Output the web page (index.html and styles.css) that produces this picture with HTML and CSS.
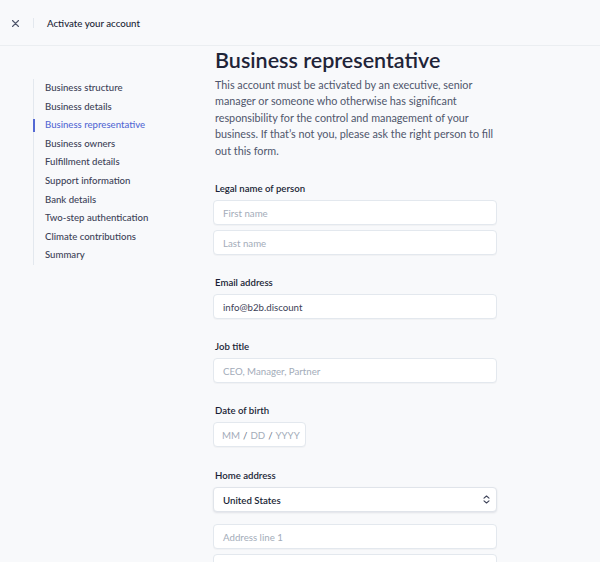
FILE: index.html
```html
<!DOCTYPE html>
<html lang="en">
<head>
<meta charset="utf-8">
<title>Activate your account</title>
<link rel="stylesheet" href="styles.css">
</head>
<body>
<header class="topbar">
  <button class="close" aria-label="Close">
    <svg width="7" height="7" viewBox="0 0 7 7"><path d="M0.5 0.5L6.5 6.5M6.5 0.5L0.5 6.5" stroke="#4f566b" stroke-width="1.1" stroke-linecap="round"/></svg>
  </button>
  <span class="divider"></span>
  <span class="topbar-title">Activate your account</span>
</header>
<main class="layout">
  <nav class="steps">
    <a class="step">Business structure</a>
    <a class="step">Business details</a>
    <a class="step active">Business representative</a>
    <a class="step">Business owners</a>
    <a class="step">Fulfillment details</a>
    <a class="step">Support information</a>
    <a class="step">Bank details</a>
    <a class="step">Two-step authentication</a>
    <a class="step">Climate contributions</a>
    <a class="step">Summary</a>
  </nav>
  <section class="content">
    <h1 class="title">Business representative</h1>
    <p class="intro">This account must be activated by an executive, senior manager or someone who otherwise has significant responsibility for the control and management of your business. If that’s not you, please ask the right person to fill out this form.</p>

    <div class="field first">
      <label class="label">Legal name of person</label>
      <div class="stack">
        <div class="input placeholder">First name</div>
        <div class="input placeholder">Last name</div>
      </div>
    </div>

    <div class="field">
      <label class="label">Email address</label>
      <div class="input value">info@b2b.discount</div>
    </div>

    <div class="field">
      <label class="label">Job title</label>
      <div class="input placeholder">CEO, Manager, Partner</div>
    </div>

    <div class="field">
      <label class="label">Date of birth</label>
      <div class="input date placeholder"><span>MM</span><span class="slash">/</span><span>DD</span><span class="slash">/</span><span>YYYY</span></div>
    </div>

    <div class="field home">
      <label class="label">Home address</label>
      <div class="input select">
        <span>United States</span>
        <svg width="7" height="9" viewBox="0 0 7 9"><path d="M1 3.2L3.5 1L6 3.2M1 5.8L3.5 8L6 5.8" fill="none" stroke="#3c4257" stroke-width="1.1" stroke-linecap="round" stroke-linejoin="round"/></svg>
      </div>
      <div class="stack address">
        <div class="input placeholder">Address line 1</div>
        <div class="input"></div>
      </div>
    </div>
  </section>
</main>
</body>
</html>
```
FILE: styles.css
```css
* { box-sizing: border-box; }
html, body { margin: 0; height: 100%; overflow: hidden; }
body {
  background: #f8f9fb;
  font-family: "Lato", "Liberation Sans", sans-serif;
  color: #3c4257;
}
.topbar {
  height: 46px;
  display: flex;
  align-items: center;
  border-bottom: 1px solid #ebeef1;
  padding-left: 10px;
}
.close {
  width: 11px;
  height: 11px;
  padding: 0;
  border: 0;
  background: none;
  display: flex;
  align-items: center;
  justify-content: center;
  margin-top: 1px;
}
.divider {
  width: 1px;
  height: 10px;
  background: #e3e8ee;
  margin-left: 12px;
  margin-right: 13px;
}
.topbar-title {
  font-size: 9.7px;
  font-weight: 500;
  color: #1a1f36;
  margin-top: 1px;
}
.layout {
  display: flex;
  padding-left: 33px;
}
.steps {
  width: 180px;
  flex: none;
  margin-top: 33px;
  align-self: flex-start;
  display: flex;
  flex-direction: column;
  border-left: 1px solid #e3e8ee;
}
.step {
  position: relative;
  height: 18.6px;
  line-height: 18.6px;
  padding-left: 11px;
  font-size: 9.6px;
  font-weight: 500;
  color: #3c4257;
  white-space: nowrap;
}
.step.active { color: #5469d4; }
.step.active::before {
  content: "";
  position: absolute;
  left: -1px;
  top: 3px;
  width: 2px;
  height: 13px;
  background: #5469d4;
}
.content {
  width: 285px;
  display: flex;
  flex-direction: column;
}
.title {
  margin: 0;
  font-size: 21.5px;
  line-height: 29px;
  font-weight: 600;
  color: #1f2438;
  padding-left: 2px;
  white-space: nowrap;
}
.intro {
  margin: 2px 0 0;
  padding-left: 2px;
  font-size: 10.8px;
  line-height: 16.4px;
  color: #4f566b;
}
.field {
  display: flex;
  flex-direction: column;
  margin-top: 21px;
}
.field.first { margin-top: 23px; }
.field.home { margin-top: 22px; }
.label {
  font-size: 9.6px;
  line-height: 14px;
  font-weight: 600;
  color: #1a1f36;
  padding-left: 2px;
  margin-bottom: 4px;
}
.stack {
  display: flex;
  flex-direction: column;
  gap: 5px;
}
.address { margin-top: 12px; }
.input {
  height: 25px;
  width: 284px;
  background: #fff;
  border: 1px solid #e3e8ee;
  border-radius: 4px;
  box-shadow: 0 1px 1px rgba(0,0,0,0.03);
  display: flex;
  align-items: center;
  padding: 0 9px;
  font-size: 9.7px;
}
.placeholder { color: #a3acb9; }
.value { color: #3c4257; }
.date {
  width: 93px;
  gap: 3px;
  padding: 0 8px;
}
.date .slash { color: #697386; }
.select {
  justify-content: space-between;
  font-weight: 600;
  color: #1a1f36;
  border-color: #e0e4ea;
  box-shadow: 0 1px 2px rgba(60,66,87,0.12);
  padding-right: 6px;
}
```
